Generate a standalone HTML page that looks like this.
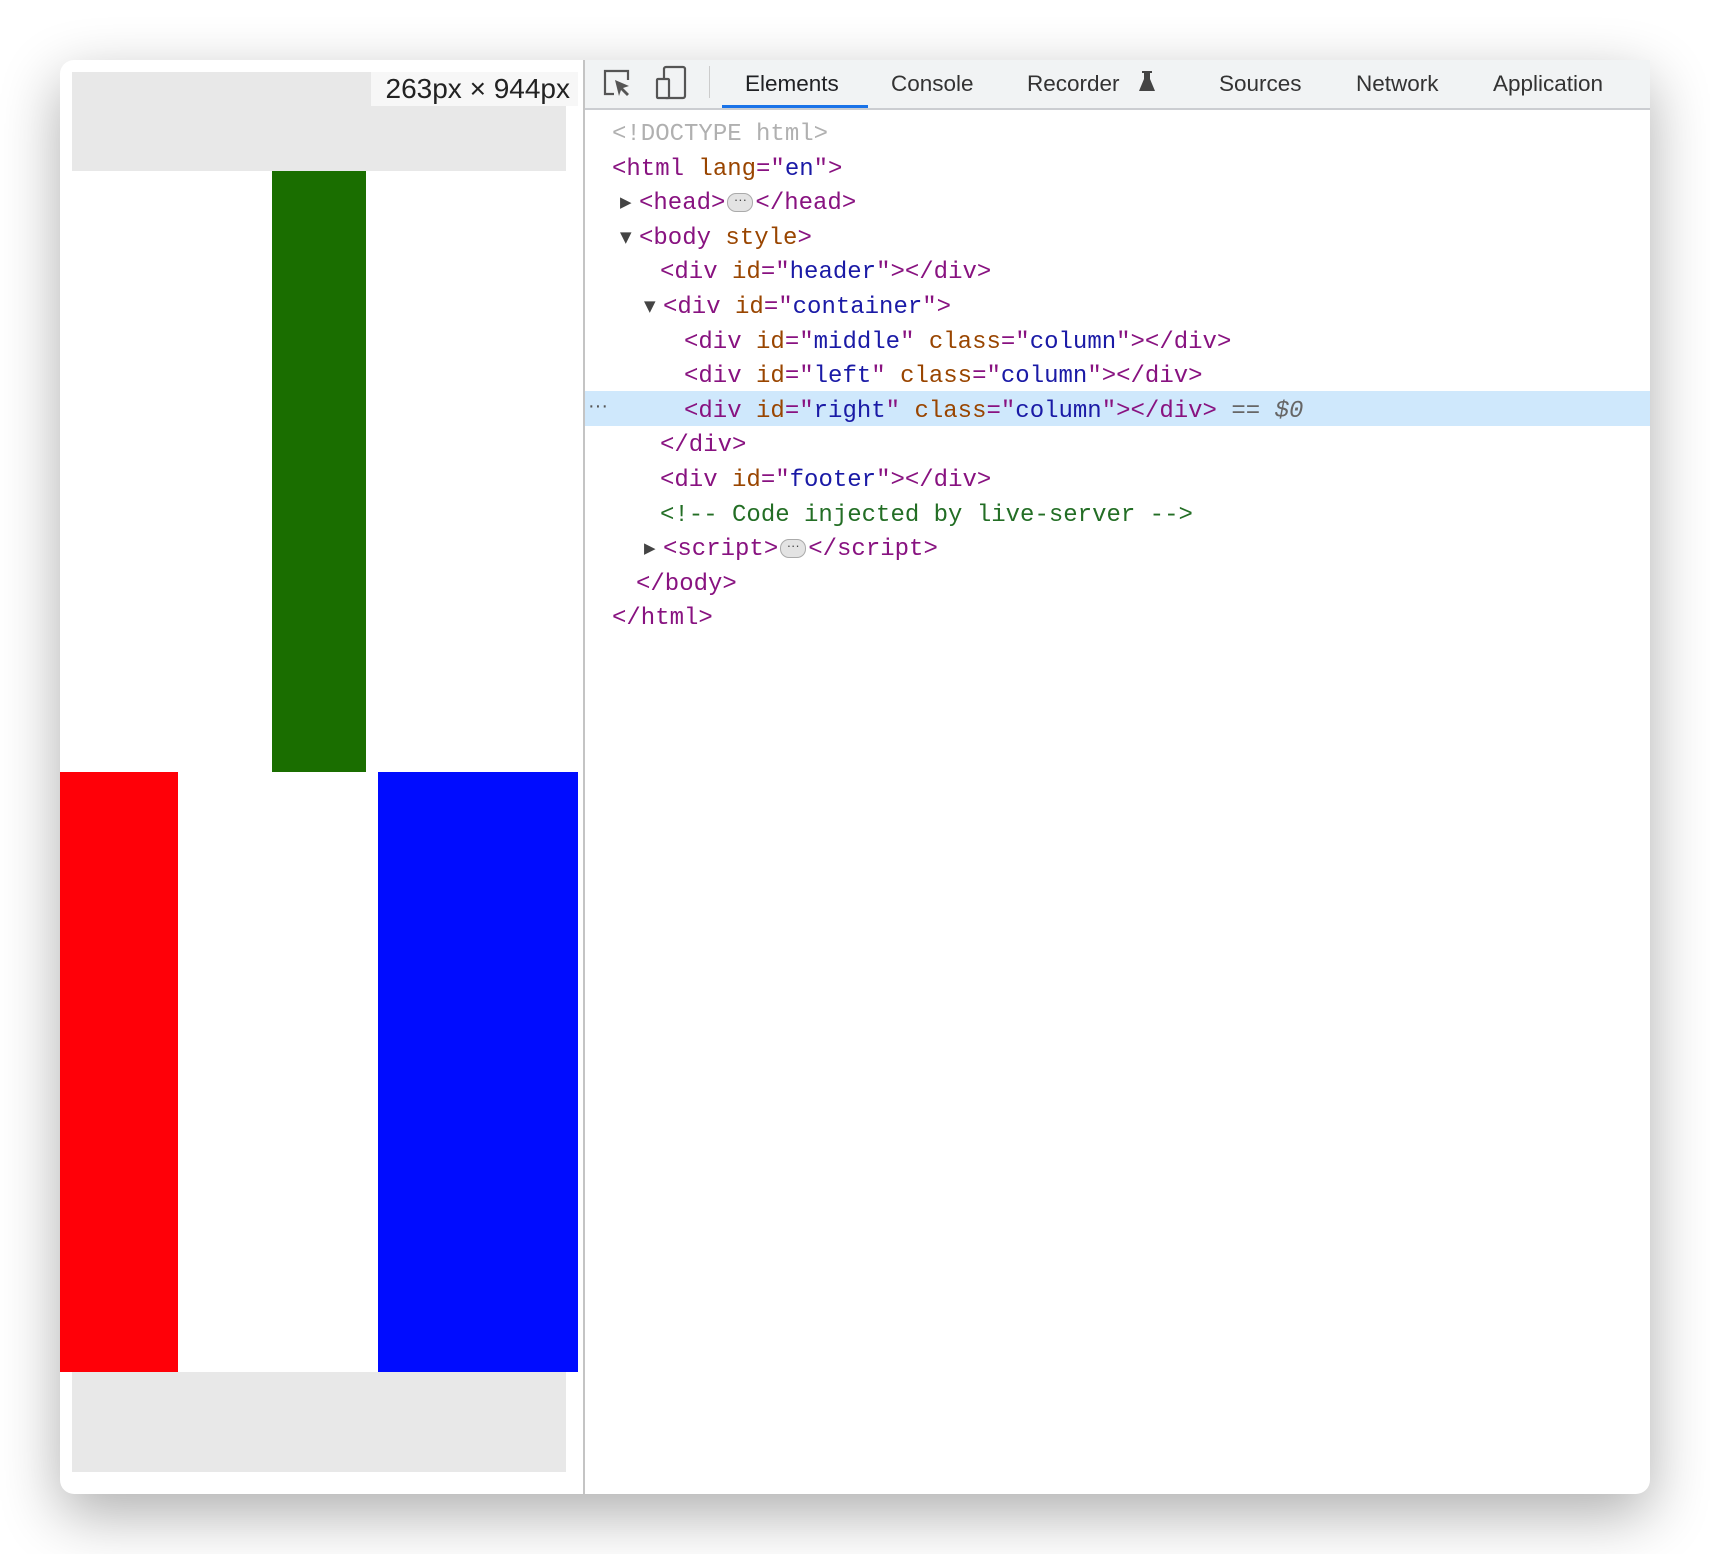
<!DOCTYPE html>
<html><head><style>
body{margin:0;width:1710px;height:1554px;background:#fff;position:relative;overflow:hidden;font-family:"Liberation Sans",sans-serif}
.win{position:absolute;left:60px;top:60px;width:1590px;height:1434px;background:#fff;border-radius:14px;box-shadow:0 20px 60px rgba(0,0,0,.32);overflow:hidden}
.a{position:absolute}
.code{position:absolute;left:0;top:118px;font-family:"Liberation Mono",monospace;font-size:24px;line-height:34.6px;color:#881280}
.code div{height:34.6px;white-space:pre}
.n{color:#994500}.v{color:#1a1aa6}.c{color:#236e25}.d{color:#b0b0b0}
.ar{display:inline-block;width:27px;box-sizing:border-box;padding-left:8px;color:#444;font-size:15px;vertical-align:top;font-family:"DejaVu Sans",sans-serif;line-height:30px}
.tab{position:absolute;top:71px;font-size:22.5px;color:#333}
.dot{display:inline-block;width:24px;height:17px;border-radius:9px;background:#e3e3e3;border:1px solid #aaa;vertical-align:middle;font-size:13px;line-height:12px;text-align:center;color:#444;font-family:"Liberation Sans",sans-serif;margin:0 2px}
</style></head><body>
<div class="win"></div>
<div class="a" style="left:72px;top:72px;width:494px;height:99px;background:#e8e8e8"></div>
<div class="a" style="left:371px;top:72px;width:207px;height:34px;background:#f7f7f7;font-size:28px;color:#222;line-height:34px;text-align:right;padding-right:8px;box-sizing:border-box;white-space:nowrap">263px × 944px</div>
<div class="a" style="left:272px;top:171px;width:94px;height:601px;background:#1a6e00"></div>
<div class="a" style="left:60px;top:772px;width:118px;height:600px;background:#ff0008"></div>
<div class="a" style="left:378px;top:772px;width:200px;height:600px;background:#000cff"></div>
<div class="a" style="left:72px;top:1372px;width:494px;height:100px;background:#e8e8e8"></div>
<div class="a" style="left:583px;top:60px;width:2px;height:1434px;background:#c4c4c4"></div>
<div class="a" style="left:585px;top:60px;width:1065px;height:48px;background:#f1f3f4;border-bottom:2px solid #cbcdd1"></div>
<svg class="a" style="left:600px;top:66px" width="36" height="36" viewBox="0 0 36 36" fill="none" stroke="#555" stroke-width="2.2"><path d="M14 28H5V5h23v9"/><path d="M15 14l14 6-6 2 6 6-2 2-6-6-2 6z" fill="#555" stroke="none"/></svg>
<svg class="a" style="left:654px;top:64px" width="36" height="38" viewBox="0 0 36 38" fill="none" stroke="#555" stroke-width="2.2"><rect x="10" y="3" width="21" height="31" rx="2"/><rect x="3" y="15" width="12" height="19" rx="1" fill="#f1f3f4"/></svg>
<div class="a" style="left:709px;top:66px;width:1px;height:32px;background:#ccc"></div>
<div class="tab" style="left:745px;color:#202124">Elements</div>
<div class="a" style="left:722px;top:105px;width:146px;height:3px;background:#1a73e8"></div>
<div class="tab" style="left:891px">Console</div>
<div class="tab" style="left:1027px">Recorder</div>
<svg class="a" style="left:1138px;top:70px" width="18" height="22" viewBox="0 0 18 22"><path d="M4 1h10v2h-2v6l5 12H1L6 9V3H4z" fill="#444"/></svg>
<div class="tab" style="left:1219px">Sources</div>
<div class="tab" style="left:1356px">Network</div>
<div class="tab" style="left:1493px">Application</div>
<div class="a" style="left:585px;top:391px;width:1065px;height:35px;background:#cfe8fc"></div>
<div class="a" style="left:588px;top:391px;font-size:20px;color:#555;line-height:30px">···</div>
<div class="code"><div style="padding-left:612px"><span class="d">&lt;!DOCTYPE html&gt;</span></div><div style="padding-left:612px">&lt;html <span class="n">lang</span>="<span class="v">en</span>"&gt;</div><div style="padding-left:612px"><span class="ar">▶</span>&lt;head&gt;<span class="dot">···</span>&lt;/head&gt;</div><div style="padding-left:612px"><span class="ar">▼</span>&lt;body <span class="n">style</span>&gt;</div><div style="padding-left:660px">&lt;div <span class="n">id</span>="<span class="v">header</span>"&gt;&lt;/div&gt;</div><div style="padding-left:636px"><span class="ar">▼</span>&lt;div <span class="n">id</span>="<span class="v">container</span>"&gt;</div><div style="padding-left:684px">&lt;div <span class="n">id</span>="<span class="v">middle</span>" <span class="n">class</span>="<span class="v">column</span>"&gt;&lt;/div&gt;</div><div style="padding-left:684px">&lt;div <span class="n">id</span>="<span class="v">left</span>" <span class="n">class</span>="<span class="v">column</span>"&gt;&lt;/div&gt;</div><div style="padding-left:684px">&lt;div <span class="n">id</span>="<span class="v">right</span>" <span class="n">class</span>="<span class="v">column</span>"&gt;&lt;/div&gt; <span style="color:#666">==</span> <i style="color:#666">$0</i></div><div style="padding-left:660px">&lt;/div&gt;</div><div style="padding-left:660px">&lt;div <span class="n">id</span>="<span class="v">footer</span>"&gt;&lt;/div&gt;</div><div style="padding-left:660px"><span class="c">&lt;!-- Code injected by live-server --&gt;</span></div><div style="padding-left:636px"><span class="ar">▶</span>&lt;script&gt;<span class="dot">···</span>&lt;/script&gt;</div><div style="padding-left:636px">&lt;/body&gt;</div><div style="padding-left:612px">&lt;/html&gt;</div></div>
</body></html>
